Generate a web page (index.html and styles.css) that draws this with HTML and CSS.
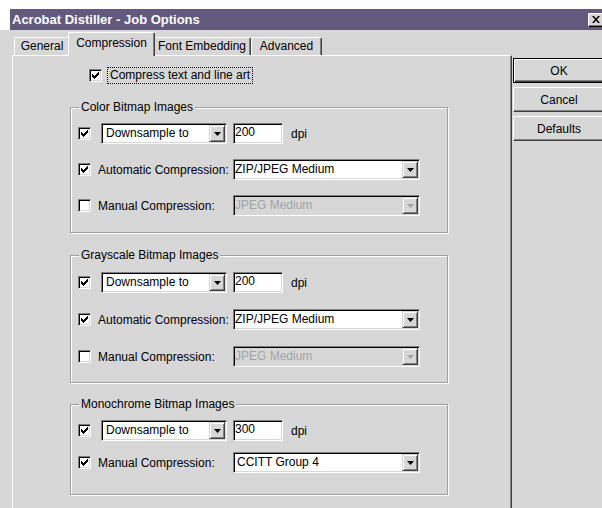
FILE: index.html
```html
<!DOCTYPE html>
<html lang="en">
<head>
<meta charset="utf-8">
<title>Acrobat Distiller - Job Options</title>
<link rel="stylesheet" href="styles.css">
</head>
<body>
<div class="dialog">
  <div class="caption">
    <span class="caption-title">Acrobat Distiller - Job Options</span>
    <span class="caption-close">
      <svg viewBox="0 0 8 7"><path d="M0 0h2l2 2.5L6 0h2L5 3.5 8 7H6L4 4.5 2 7H0l3-3.5z"/></svg>
    </span>
  </div>

  <div class="client">
    <div class="sheet">
      <div class="tabs">
        <div class="tab tab-general">General</div>
        <div class="tab tab-compression is-active">Compression</div>
        <div class="tab tab-fonts">Font Embedding</div>
        <div class="tab tab-advanced">Advanced</div>
      </div>

      <div class="page">
        <div class="option-top">
          <span class="check"><svg viewBox="0 0 7 7"><path d="M0 2l2 2 5-5v3l-5 5-2-2z"/></svg></span>
          <span class="focus-label">Compress text and line art</span>
        </div>

        <div class="group">
          <span class="legend">Color Bitmap Images</span>
          <div class="row">
            <span class="check"><svg viewBox="0 0 7 7"><path d="M0 2l2 2 5-5v3l-5 5-2-2z"/></svg></span>
            <div class="combo combo-sample"><span class="combo-value">Downsample to</span><span class="drop"><svg viewBox="0 0 7 4"><path d="M0 0h7L3.5 4z"/></svg></span></div>
            <div class="field">200</div>
            <span class="unit">dpi</span>
          </div>
          <div class="row">
            <span class="check"><svg viewBox="0 0 7 7"><path d="M0 2l2 2 5-5v3l-5 5-2-2z"/></svg></span>
            <span class="label">Automatic Compression:</span>
            <div class="combo combo-wide"><span class="combo-value">ZIP/JPEG Medium</span><span class="drop"><svg viewBox="0 0 7 4"><path d="M0 0h7L3.5 4z"/></svg></span></div>
          </div>
          <div class="row">
            <span class="check"></span>
            <span class="label">Manual Compression:</span>
            <div class="combo combo-wide is-disabled"><span class="combo-value">JPEG Medium</span><span class="drop"><svg viewBox="0 0 7 4"><path d="M0 0h7L3.5 4z"/></svg></span></div>
          </div>
        </div>

        <div class="group group-gray">
          <span class="legend">Grayscale Bitmap Images</span>
          <div class="row">
            <span class="check"><svg viewBox="0 0 7 7"><path d="M0 2l2 2 5-5v3l-5 5-2-2z"/></svg></span>
            <div class="combo combo-sample"><span class="combo-value">Downsample to</span><span class="drop"><svg viewBox="0 0 7 4"><path d="M0 0h7L3.5 4z"/></svg></span></div>
            <div class="field">200</div>
            <span class="unit">dpi</span>
          </div>
          <div class="row">
            <span class="check"><svg viewBox="0 0 7 7"><path d="M0 2l2 2 5-5v3l-5 5-2-2z"/></svg></span>
            <span class="label">Automatic Compression:</span>
            <div class="combo combo-wide"><span class="combo-value">ZIP/JPEG Medium</span><span class="drop"><svg viewBox="0 0 7 4"><path d="M0 0h7L3.5 4z"/></svg></span></div>
          </div>
          <div class="row">
            <span class="check"></span>
            <span class="label">Manual Compression:</span>
            <div class="combo combo-wide is-disabled"><span class="combo-value">JPEG Medium</span><span class="drop"><svg viewBox="0 0 7 4"><path d="M0 0h7L3.5 4z"/></svg></span></div>
          </div>
        </div>

        <div class="group group-mono">
          <span class="legend">Monochrome Bitmap Images</span>
          <div class="row">
            <span class="check"><svg viewBox="0 0 7 7"><path d="M0 2l2 2 5-5v3l-5 5-2-2z"/></svg></span>
            <div class="combo combo-sample"><span class="combo-value">Downsample to</span><span class="drop"><svg viewBox="0 0 7 4"><path d="M0 0h7L3.5 4z"/></svg></span></div>
            <div class="field">300</div>
            <span class="unit">dpi</span>
          </div>
          <div class="row">
            <span class="check"><svg viewBox="0 0 7 7"><path d="M0 2l2 2 5-5v3l-5 5-2-2z"/></svg></span>
            <span class="label">Manual Compression:</span>
            <div class="combo combo-wide"><span class="combo-value combo-value-pad">CCITT Group 4</span><span class="drop"><svg viewBox="0 0 7 4"><path d="M0 0h7L3.5 4z"/></svg></span></div>
          </div>
        </div>
      </div>
    </div>

    <div class="actions">
      <div class="btn btn-default">OK</div>
      <div class="btn">Cancel</div>
      <div class="btn">Defaults</div>
    </div>
  </div>
</div>
</body>
</html>
```

FILE: styles.css
```css
* {
  box-sizing: border-box;
}

html,
body {
  margin: 0;
}

body {
  width: 602px;
  height: 508px;
  overflow: hidden;
  background: #fff;
  font-family: "Liberation Sans", Arial, sans-serif;
  font-size: 12px;
  color: #000;
}

.dialog {
  display: flex;
  flex-direction: column;
  height: 100%;
}

/* ---- caption bar ---- */
.caption {
  flex-shrink: 0;
  margin: 9px 0 0 10px;
  height: 21px;
  background: #625a7c;
  display: flex;
  align-items: center;
  justify-content: space-between;
  overflow: hidden;
}

.caption-title {
  padding-left: 2px;
  color: #fff;
  font-weight: bold;
  font-size: 13px;
  white-space: nowrap;
}

.caption-close {
  flex-shrink: 0;
  width: 16px;
  height: 14px;
  margin-right: -2px;
  background: #d7d7d7;
  border: 1px solid;
  border-color: #fff #000 #000 #fff;
  box-shadow: inset -1px -1px 0 #808080;
  display: flex;
  align-items: center;
  justify-content: center;
}

.caption-close svg {
  width: 8px;
  height: 7px;
  fill: #000;
}

/* ---- client area ---- */
.client {
  flex: 1;
  display: flex;
  background: #d7d7d7;
  min-height: 0;
}

.sheet {
  flex-shrink: 0;
  width: 512px;
  padding-left: 12px;
  display: flex;
  flex-direction: column;
}

/* ---- tab strip ---- */
.tabs {
  flex-shrink: 0;
  height: 25px;
  padding-left: 2px;
  display: flex;
  align-items: flex-end;
}

.tab {
  height: 18px;
  padding-top: 1px;
  line-height: 15px;
  text-align: center;
  white-space: nowrap;
  background: #d7d7d7;
  border-top: 1px solid #fff;
  border-left: 1px solid #fff;
  border-right: 1px solid #404040;
  border-radius: 2px 2px 0 0;
  box-shadow: inset -1px 0 0 #808080;
}

.tab-general { width: 56px; }
.tab-compression { width: 83px; }
.tab-fonts { width: 98px; }
.tab-advanced { width: 71px; }

.tab.is-active {
  position: relative;
  z-index: 1;
  width: 87px;
  height: 24px;
  margin: 0 -2px -1px;
  padding-top: 3px;
}

/* ---- property page ---- */
.page {
  flex: 1;
  padding-top: 11px;
  border-top: 1px solid #fff;
  border-left: 1px solid #fff;
  border-right: 1px solid #404040;
  box-shadow: inset -1px 0 0 #808080;
}

.option-top {
  height: 17px;
  margin-left: 76px;
  display: flex;
  align-items: center;
}

.focus-label {
  margin-left: 5px;
  padding: 0 2px;
  line-height: 15px;
  border: 1px dotted #000;
  white-space: nowrap;
}

/* ---- etched group boxes ---- */
.group {
  position: relative;
  width: 378px;
  margin: 23px 0 0 57px;
  padding: 15px 0 16px 7px;
  border: 1px solid #a0a0a0;
  box-shadow: inset 1px 1px 0 #fff, 1px 1px 0 #fff;
  display: flex;
  flex-direction: column;
  gap: 15px;
}

.group + .group {
  margin-top: 22px;
}

.group-gray {
  padding-top: 16px;
  padding-bottom: 15px;
  gap: 16px;
}

.group.group-mono {
  margin-top: 21px;
  gap: 11px;
  padding-bottom: 21px;
}

.legend {
  position: absolute;
  top: -9px;
  left: 8px;
  padding: 0 2px;
  line-height: 16px;
  background: #d7d7d7;
  white-space: nowrap;
}

.row {
  height: 21px;
  display: flex;
  align-items: center;
}

/* ---- checkbox ---- */
.check {
  flex-shrink: 0;
  width: 13px;
  height: 13px;
  background: #fff;
  border: 1px solid;
  border-color: #808080 #fff #fff #808080;
  box-shadow: inset 1px 1px 0 #000, inset -1px -1px 0 #d7d7d7;
  display: flex;
  align-items: center;
  justify-content: center;
}

.check svg {
  width: 7px;
  height: 7px;
  fill: #000;
  shape-rendering: crispEdges;
}

.label {
  width: 135px;
  margin-left: 7px;
  white-space: nowrap;
}

/* ---- combo boxes and edit fields ---- */
.combo,
.field {
  flex-shrink: 0;
  height: 21px;
  padding: 1px;
  background: #fff;
  border: 1px solid;
  border-color: #808080 #fff #fff #808080;
  box-shadow: inset 1px 1px 0 #000, inset -1px -1px 0 #d7d7d7;
}

.combo {
  display: flex;
}

.combo-sample {
  width: 126px;
  margin-left: 10px;
}

.combo-wide {
  width: 187px;
}

.combo-value {
  flex: 1;
  min-width: 0;
  line-height: 17px;
  white-space: nowrap;
  overflow: hidden;
}

.combo-sample .combo-value {
  padding-left: 3px;
}

.combo-value-pad {
  padding-left: 2px;
}

.drop {
  flex-shrink: 0;
  width: 16px;
  height: 17px;
  background: #d7d7d7;
  border: 1px solid;
  border-color: #d7d7d7 #404040 #404040 #d7d7d7;
  box-shadow: inset 1px 1px 0 #fff, inset -1px -1px 0 #808080;
  display: flex;
  align-items: center;
  justify-content: center;
}

.drop svg {
  width: 7px;
  height: 4px;
  fill: #000;
}

.combo.is-disabled {
  background: #d7d7d7;
  color: #a4a4a4;
}

.combo.is-disabled .drop svg {
  fill: #a4a4a4;
}

.field {
  width: 50px;
  margin-left: 6px;
  line-height: 15px;
}

.unit {
  margin-left: 8px;
}

/* ---- command buttons ---- */
.actions {
  flex: 1;
  min-width: 0;
  padding: 28px 0 0 1px;
  display: flex;
  flex-direction: column;
  gap: 4px;
}

.btn {
  flex-shrink: 0;
  width: 92px;
  height: 25px;
  background: #d7d7d7;
  border: 1px solid;
  border-color: #fff #404040 #404040 #fff;
  box-shadow: inset -1px -1px 0 #808080;
  display: flex;
  align-items: center;
  justify-content: center;
}

.btn-default {
  border-color: #000;
  box-shadow: inset 1px 1px 0 #fff, inset -1px -1px 0 #404040, inset -2px -2px 0 #808080;
}
```
